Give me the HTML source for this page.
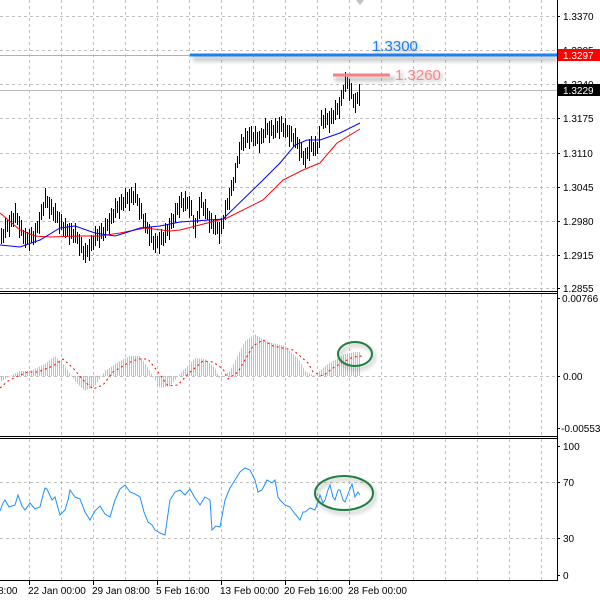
<!DOCTYPE html>
<html><head><meta charset="utf-8"><style>
html,body{margin:0;padding:0;background:#fff;width:600px;height:601px;overflow:hidden}
svg{display:block;font-family:"Liberation Sans",sans-serif}
</style></head><body>
<svg width="600" height="601" xmlns="http://www.w3.org/2000/svg">
<defs>
<filter id="sh" x="-20%" y="-200%" width="140%" height="500%"><feGaussianBlur stdDeviation="2"/></filter>
<pattern id="vb" x="1" y="0" width="2" height="10" patternUnits="userSpaceOnUse"><rect width="1" height="10" fill="#c0c0c0"/></pattern>
</defs>
<!-- grid -->
<g stroke="#c0c0c0" stroke-dasharray="3 3" stroke-width="1">
<path d="M29.5 0V291M61.5 0V291M93.5 0V291M125.5 0V291M157.5 0V291M189.5 0V291M221.5 0V291M253.5 0V291M285.5 0V291M317.5 0V291M349.5 0V291M381.5 0V291M413.5 0V291M445.5 0V291M477.5 0V291M509.5 0V291M541.5 0V291"/>
<path d="M29.5 294V436M61.5 294V436M93.5 294V436M125.5 294V436M157.5 294V436M189.5 294V436M221.5 294V436M253.5 294V436M285.5 294V436M317.5 294V436M349.5 294V436M381.5 294V436M413.5 294V436M445.5 294V436M477.5 294V436M509.5 294V436M541.5 294V436"/>
<path d="M29.5 439V580M61.5 439V580M93.5 439V580M125.5 439V580M157.5 439V580M189.5 439V580M221.5 439V580M253.5 439V580M285.5 439V580M317.5 439V580M349.5 439V580M381.5 439V580M413.5 439V580M445.5 439V580M477.5 439V580M509.5 439V580M541.5 439V580"/>
<path d="M0 16.5H557M0 50.5H557M0 84.5H557M0 118.5H557M0 153.5H557M0 187.5H557M0 221.5H557M0 255.5H557M0 288.5H557M0 376.5H557M0 482.5H557M0 538.5H557"/>
</g>
<line x1="0" y1="55.5" x2="557" y2="55.5" stroke="#b0b0b0"/>
<line x1="0" y1="90.5" x2="557" y2="90.5" stroke="#b8b8b8"/>
<!-- bars -->
<path stroke="#000" stroke-width="1" fill="none" d="M1.5 228v16M3.5 229v14M5.5 218v20M7.5 220v12M9.5 215v22M11.5 211v16M13.5 213v14M15.5 203v20M17.5 213v12M19.5 216v22M21.5 220v16M23.5 230v14M25.5 228v20M27.5 232v12M29.5 229v22M31.5 227v16M33.5 231v14M35.5 223v20M37.5 221v12M39.5 212v22M41.5 204v16M43.5 202v14M45.5 188v20M47.5 196v12M49.5 197v22M51.5 199v16M53.5 207v14M55.5 203v20M57.5 211v12M59.5 212v22M61.5 214v16M63.5 222v14M65.5 218v20M67.5 224v12M69.5 223v22M71.5 223v16M73.5 229v14M75.5 223v20M77.5 232v12M79.5 234v22M81.5 237v16M83.5 246v14M85.5 243v20M87.5 245v12M89.5 239v22M91.5 235v16M93.5 236v14M95.5 226v20M97.5 229v12M99.5 226v22M101.5 223v16M103.5 227v14M105.5 218v20M107.5 219v12M109.5 213v22M111.5 208v16M113.5 209v14M115.5 198v20M117.5 201v12M119.5 197v22M121.5 194v16M123.5 197v14M125.5 188v20M127.5 192v12M129.5 189v22M131.5 187v16M133.5 191v14M135.5 183v20M137.5 194v12M139.5 198v22M141.5 203v16M143.5 214v14M145.5 213v20M147.5 222v12M149.5 224v22M151.5 227v16M153.5 236v14M155.5 233v20M157.5 236v12M159.5 232v22M161.5 229v16M163.5 232v14M165.5 223v20M167.5 224v12M169.5 218v22M171.5 213v16M173.5 214v14M175.5 203v20M177.5 203v12M179.5 196v22M181.5 192v16M183.5 198v14M185.5 191v20M187.5 197v12M189.5 196v22M191.5 200v16M193.5 215v14M195.5 218v20M197.5 211v12M199.5 197v22M201.5 192v16M203.5 202v14M205.5 199v20M207.5 208v12M209.5 211v22M211.5 213v16M213.5 220v14M215.5 215v20M217.5 222v12M219.5 222v22M221.5 218v16M223.5 215v14M225.5 200v20M227.5 198v12M229.5 188v22M231.5 180v16M233.5 177v14M235.5 163v20M237.5 156v12M239.5 142v22M241.5 134v16M243.5 137v14M245.5 128v20M247.5 131v12M249.5 127v22M251.5 126v16M253.5 132v14M255.5 126v20M257.5 132v12M259.5 131v22M261.5 128v16M263.5 129v14M265.5 118v20M267.5 123v12M269.5 121v22M271.5 120v16M273.5 125v14M275.5 118v20M277.5 121v12M279.5 117v22M281.5 116v16M283.5 123v14M285.5 118v20M287.5 125v12M289.5 125v22M291.5 126v16M293.5 133v14M295.5 128v20M297.5 137v12M299.5 139v22M301.5 142v16M303.5 151v14M305.5 148v20M307.5 147v12M309.5 139v22M311.5 136v16M313.5 142v14M315.5 136v20M317.5 142v12M319.5 126v22M321.5 110v16M323.5 115v14M325.5 108v20M327.5 113v12M329.5 111v22M331.5 108v16M333.5 110v14M335.5 100v20M337.5 103v12M339.5 97v22M341.5 90v16M343.5 85v14M345.5 72v20M347.5 77v12M349.5 79v22M351.5 83v16M353.5 94v14M355.5 93v20M357.5 92v12M359.5 84v22"/>
<!-- MAs -->
<polyline fill="none" stroke="#ff0000" points="0,213 20,230 35,236 50,237 80,236 100,236 120,233 145,228 170,231 180,230 227,218 263,200 283,180 303,170 320,163 337,143 360,129"/>
<polyline fill="none" stroke="#0000ff" points="0,245 20,247 40,240 60,228 75,226 95,233 115,236 125,233 140,228 160,226 180,222 223,219 263,180 280,163 295,145 307,140 320,140 340,133 360,123"/>
<!-- objects -->
<rect x="193" y="57" width="364" height="4" fill="#777" opacity="0.5" filter="url(#sh)"/>
<line x1="190" y1="55" x2="557" y2="55" stroke="#1e7ff0" stroke-width="3"/>
<rect x="335" y="77" width="60" height="4" fill="#777" opacity="0.5" filter="url(#sh)"/>
<line x1="333" y1="75" x2="390" y2="75" stroke="#f88080" stroke-width="3"/>
<text x="374" y="53" font-size="15" fill="#777" opacity="0.6" filter="url(#sh)">1.3300</text>
<text x="372" y="51" font-size="15" fill="#1e7ff0">1.3300</text>
<text x="397" y="82" font-size="15" fill="#777" opacity="0.6" filter="url(#sh)">1.3260</text>
<text x="395" y="80" font-size="15" fill="#f88888">1.3260</text>
<!-- MACD -->
<polygon fill="url(#vb)" points="0,376 0,382 10,376 20,371 30,371 45,364 55,356 65,366 75,381 85,391 95,386 105,371 120,361 130,356 140,356 150,371 160,388 170,386 180,374 195,358 205,359 215,368 220,379 230,371 245,341 255,334 265,341 285,346 300,361 305,371 315,376 325,366 335,360 345,354 355,352 361,352 361,376"/>
<polyline fill="none" stroke="#ff0000" stroke-dasharray="2 3" points="0,388 8,381 18,376 28,372 38,372 53,366 63,359 73,368 83,380 93,389 103,385 113,372 128,363 138,359 148,359 158,372 168,386 178,385 188,374 203,361 213,362 223,369 228,379 238,372 253,346 263,340 273,346 293,350 308,363 313,372 323,376 333,368 343,362 353,357 362,356"/>
<!-- RSI -->
<polyline fill="none" stroke="#1e90ff" points="0,511 3,503 5,500 9,507 15,505 18,495 22,506 25,510 30,503 35,509 40,507 43,495 45,488 47,489 52,500 55,497 60,515 65,510 68,500 70,490 75,497 80,499 85,512 90,520 95,511 100,506 105,514 110,517 115,500 120,489 125,485 130,492 135,494 140,497 144,512 148,522 152,525 155,530 160,533 165,535 170,500 175,492 180,490 185,495 190,489 195,498 200,505 205,497 210,500 212,530 216,526 220,527 225,500 230,488 235,480 240,472 245,468 250,470 255,480 258,492 262,490 267,480 272,483 275,480 278,497 280,500 285,505 290,507 295,514 300,520 303,512 305,512 310,508 315,510 318,502 320,495 323,503 325,500 328,490 330,485 333,497 335,500 338,490 340,490 343,500 345,502 348,494 352,484 355,497 358,492 360,495"/>
<!-- ellipses -->
<ellipse cx="357" cy="357" rx="17" ry="12" fill="none" stroke="#777" stroke-width="3" opacity="0.4" filter="url(#sh)"/>
<ellipse cx="355" cy="354" rx="17" ry="12" fill="none" stroke="#1e8040" stroke-width="2"/>
<ellipse cx="346" cy="496" rx="29" ry="17" fill="none" stroke="#777" stroke-width="3" opacity="0.4" filter="url(#sh)"/>
<ellipse cx="344" cy="493" rx="29" ry="17" fill="none" stroke="#1e8040" stroke-width="2"/>
<!-- borders -->
<path stroke="#000" fill="none" d="M0 291.5H558M0 293.5H558M0 436.5H558M0 438.5H558M0 580.5H558M557.5 0V581"/>
<polygon points="356,0 364,0 360,5" fill="#c0c0c0"/>
<!-- ticks -->
<path stroke="#000" d="M557 16.5h3M557 50.5h3M557 84.5h3M557 118.5h3M557 153.5h3M557 187.5h3M557 221.5h3M557 255.5h3M557 288.5h3M557 298.5h3M557 376.5h3M557 428.5h3M557 446.5h3M557 482.5h3M557 538.5h3M557 575.5h3M29.5 581v4M93.5 581v4M157.5 581v4M221.5 581v4M285.5 581v4M349.5 581v4"/>
<g font-size="10" fill="#000">
<text x="563" y="20">1.3370</text>
<text x="563" y="54">1.3305</text>
<text x="563" y="88">1.3240</text>
<text x="563" y="122">1.3175</text>
<text x="563" y="157">1.3110</text>
<text x="563" y="191">1.3045</text>
<text x="563" y="225">1.2980</text>
<text x="563" y="259">1.2915</text>
<text x="563" y="292">1.2855</text>
<rect x="558" y="49" width="42" height="12" fill="#ff0000"/>
<text x="563" y="59" fill="#fff">1.3297</text>
<rect x="558" y="84" width="42" height="12" fill="#000"/>
<text x="563" y="94" fill="#fff">1.3229</text>
<text x="562" y="302">0.00766</text>
<text x="563" y="380">0.00</text>
<text x="561" y="432">-0.00553</text>
<text x="563" y="450">100</text>
<text x="563" y="486">70</text>
<text x="563" y="542">30</text>
<text x="563" y="579">0</text>
<text x="-2" y="594">8:00</text>
<text x="28" y="594">22 Jan 00:00</text>
<text x="92" y="594">29 Jan 08:00</text>
<text x="156" y="594">5 Feb 16:00</text>
<text x="220" y="594">13 Feb 00:00</text>
<text x="284" y="594">20 Feb 16:00</text>
<text x="348" y="594">28 Feb 00:00</text>
</g>
</svg>
</body></html>
